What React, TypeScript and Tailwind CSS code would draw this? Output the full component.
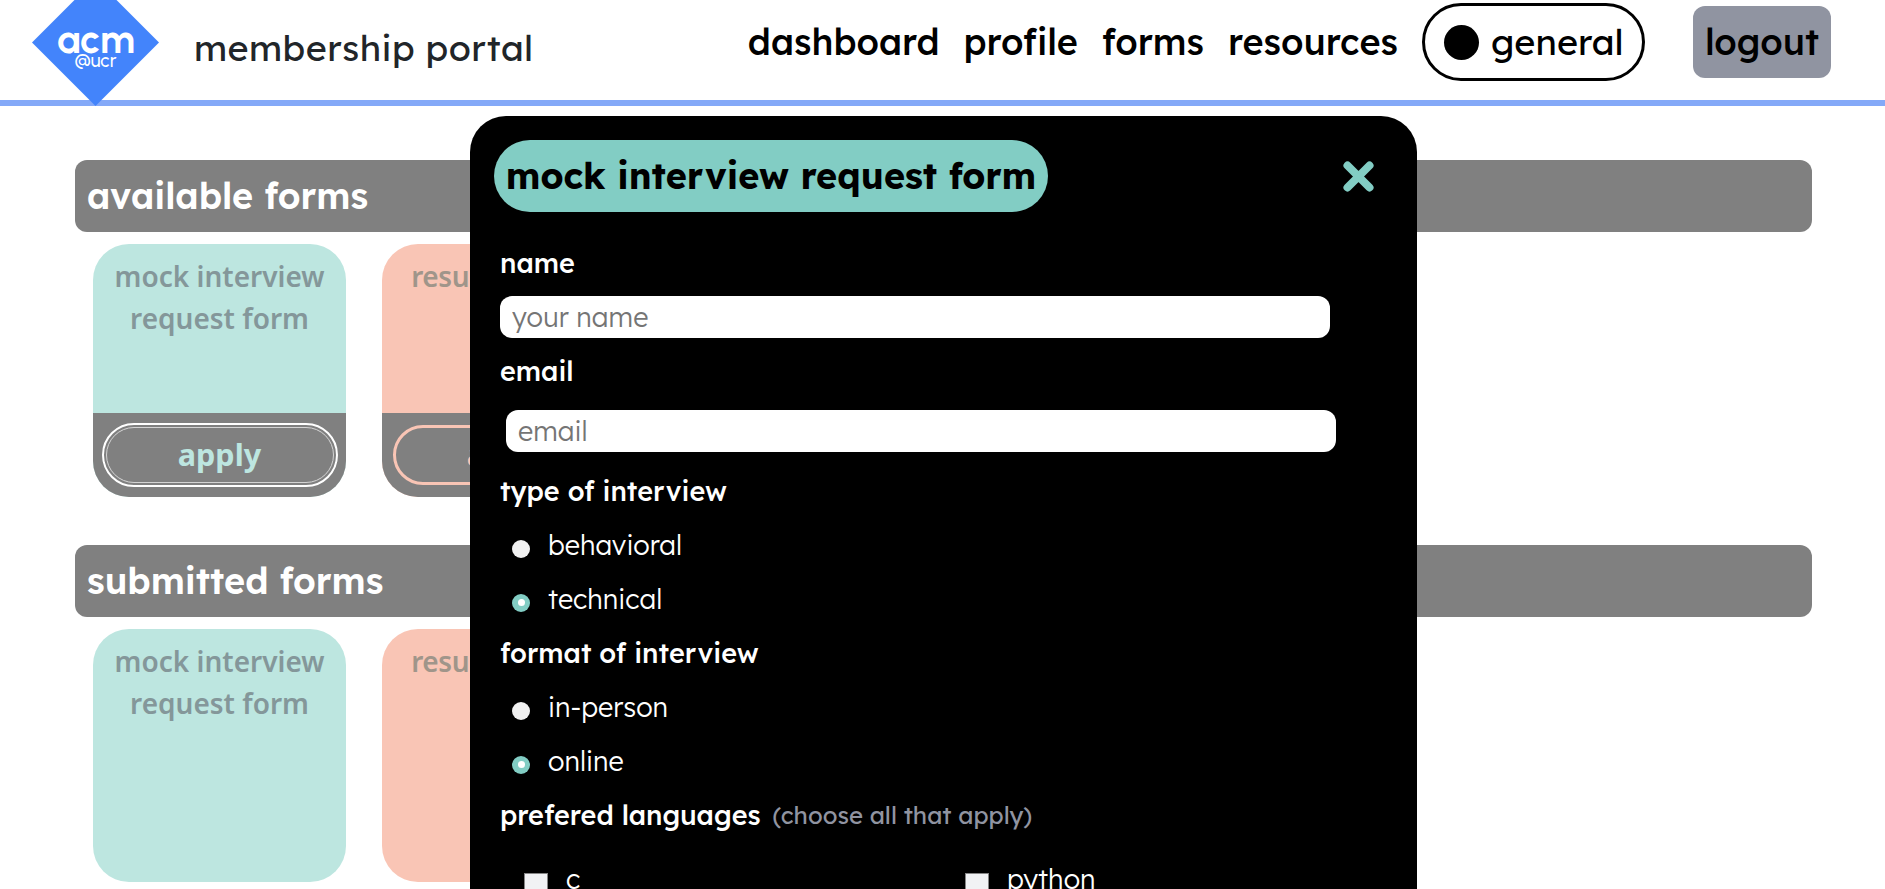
import type { ReactNode } from "react";

const navLinks = ["dashboard", "profile", "forms", "resources"];

function Logo() {
  return (
    <svg className="h-[127px] w-[127px] shrink-0 [font-feature-settings:normal]" viewBox="0 0 127 127" aria-label="acm@ucr">
      <path d="M63.5 0 127 63.5 63.5 127 0 63.5Z" fill="#4384fb" />
      <text className="fill-white font-['Urbanist','Lexend',sans-serif] text-[41px] font-bold" x="25" y="73.5" textLength="78" lengthAdjust="spacingAndGlyphs">
        acm
      </text>
      <text className="fill-white font-['Urbanist','Lexend',sans-serif] text-[20px] font-medium" x="42.5" y="88" textLength="42" lengthAdjust="spacingAndGlyphs">
        @ucr
      </text>
    </svg>
  );
}

function Header() {
  return (
    <header className="relative z-10 flex h-[106px] items-start border-b-[6px] border-[#84a9f8] bg-white pl-8 text-4xl">
      <div className="-mt-[21px]">
        <Logo />
      </div>
      <div className="ml-[35px] flex h-24 items-center tracking-[0.4px] text-[#212529]">membership portal</div>
      <nav className="mr-[54px] ml-auto flex h-[84px] items-center font-medium text-black">
        {navLinks.map((link) => (
          <a key={link} className="px-3">
            {link}
          </a>
        ))}
        <div className="ml-3 flex h-[78px] w-[223px] items-center gap-3 rounded-[39px] border-[3px] border-black pl-[19px] font-normal">
          <span className="size-[35px] rounded-full bg-black" />
          general
        </div>
        <button className="ml-12 flex h-[72px] w-[138px] items-center justify-center rounded-xl bg-[#9094a1]">
          logout
        </button>
      </nav>
    </header>
  );
}

function SectionBar({ children }: { children: ReactNode }) {
  return (
    <h2 className="flex h-[72px] items-center rounded-xl bg-[#808080] pl-3 text-4xl font-semibold text-white">
      {children}
    </h2>
  );
}

type CardProps = { title: string; tone: "mint" | "peach"; apply?: boolean; focused?: boolean };

function FormCard({ title, tone, apply, focused }: CardProps) {
  const mint = tone === "mint";
  return (
    <article
      className={`flex h-[253px] w-[253px] flex-col overflow-hidden rounded-[36px] font-['Segoe_UI','Noto_Sans',sans-serif] ${mint ? "bg-[#bde6e0]" : "bg-[#f9c5b5]"}`}
    >
      <h3 className={`flex-1 px-5 pt-[11px] text-center text-[28px] leading-[42px] font-semibold ${mint ? "text-[#84979a]" : "tracking-[-0.4px] text-[#a0958a]"}`}>
        {title}
      </h3>
      {apply && (
        <div className="flex h-[84px] items-center justify-center bg-[#808080]">
          <button
            className={`flex items-center justify-center rounded-[30px] text-[30.5px] font-bold ${mint ? "text-[#bde6e0]" : "text-[#f9c5b5]"} ${
              focused
                ? "h-14 w-[228px] border border-[#d4d4d4] outline-2 outline-offset-2 outline-white"
                : "h-[60px] w-[231px] border-[3px] border-[#f9c5b5]"
            }`}
          >
            apply
          </button>
        </div>
      )}
    </article>
  );
}

function Section({ title, apply }: { title: string; apply?: boolean }) {
  return (
    <section>
      <SectionBar>{title}</SectionBar>
      <div className="mt-3 flex gap-9 pl-[18px]">
        <FormCard title="mock interview request form" tone="mint" apply={apply} focused />
        <FormCard title="resume review" tone="peach" apply={apply} />
      </div>
    </section>
  );
}

function Label({ children }: { children: ReactNode }) {
  return <div className="flex h-[54px] items-center font-medium">{children}</div>;
}

function Radio({ label, checked }: { label: string; checked?: boolean }) {
  return (
    <label className="flex h-[54px] items-center pl-3">
      <span
        className={`mt-[7px] mr-[18px] flex size-[18px] items-center justify-center rounded-full ${checked ? "bg-[#82cdc4]" : "bg-[#f1f1f1]"}`}
      >
        {checked && <span className="size-[7px] rounded-full bg-white" />}
      </span>
      {label}
    </label>
  );
}

function Checkbox({ label }: { label: string }) {
  return (
    <label className="flex h-[54px] items-center">
      <span className="mt-3 mr-[18px] size-6 border border-[#858585] bg-[#f1f2f4]" />
      {label}
    </label>
  );
}

const inputClass =
  "block h-[42px] w-[830px] rounded-xl bg-white px-3 font-light text-black placeholder:text-[#757575] placeholder:opacity-100";

function RequestModal() {
  return (
    <div
      role="dialog"
      className="absolute top-[116px] left-[470px] z-20 h-[773px] w-[947px] overflow-hidden rounded-t-[36px] bg-black pt-6 text-[27px] font-light text-white"
    >
      <div className="flex items-center justify-between pr-[43px] pl-6">
        <h1 className="flex h-[72px] w-[554px] items-center justify-center rounded-[36px] bg-[#82cdc4] text-4xl font-bold whitespace-nowrap text-black">
          mock interview request form
        </h1>
        <svg className="size-[31px]" viewBox="0 0 31 31" stroke="#82cdc4" strokeWidth="8" strokeLinecap="round">
          <path d="M4.5 4.5 26.5 26.5M26.5 4.5 4.5 26.5" />
        </svg>
      </div>
      <form className="mt-6 pl-[30px]">
        <Label>name</Label>
        <input className={`mt-1.5 ${inputClass}`} placeholder="your name" />
        <div className="mt-1.5">
          <Label>email</Label>
        </div>
        <input className={`mt-3 ml-1.5 ${inputClass}`} placeholder="email" />
        <div className="mt-3">
          <Label>type of interview</Label>
          <Radio label="behavioral" />
          <Radio label="technical" checked />
          <Label>format of interview</Label>
          <Radio label="in-person" />
          <Radio label="online" checked />
          <Label>
            prefered languages
            <span className="ml-3 text-2xl font-normal text-[#9094a1]">(choose all that apply)</span>
          </Label>
        </div>
        <div className="mt-[10px] grid grid-cols-[441px_441px] pl-6">
          <Checkbox label="c" />
          <Checkbox label="python" />
        </div>
      </form>
    </div>
  );
}

export default function App() {
  return (
    <div className="relative h-[889px] w-full overflow-hidden bg-white font-['Lexend','Inter',sans-serif] [font-feature-settings:'cv11']">
      <Header />
      <main className="flex flex-col gap-12 pt-[54px] pr-[73px] pl-[75px]">
        <Section title="available forms" apply />
        <Section title="submitted forms" />
      </main>
      <RequestModal />
    </div>
  );
}
